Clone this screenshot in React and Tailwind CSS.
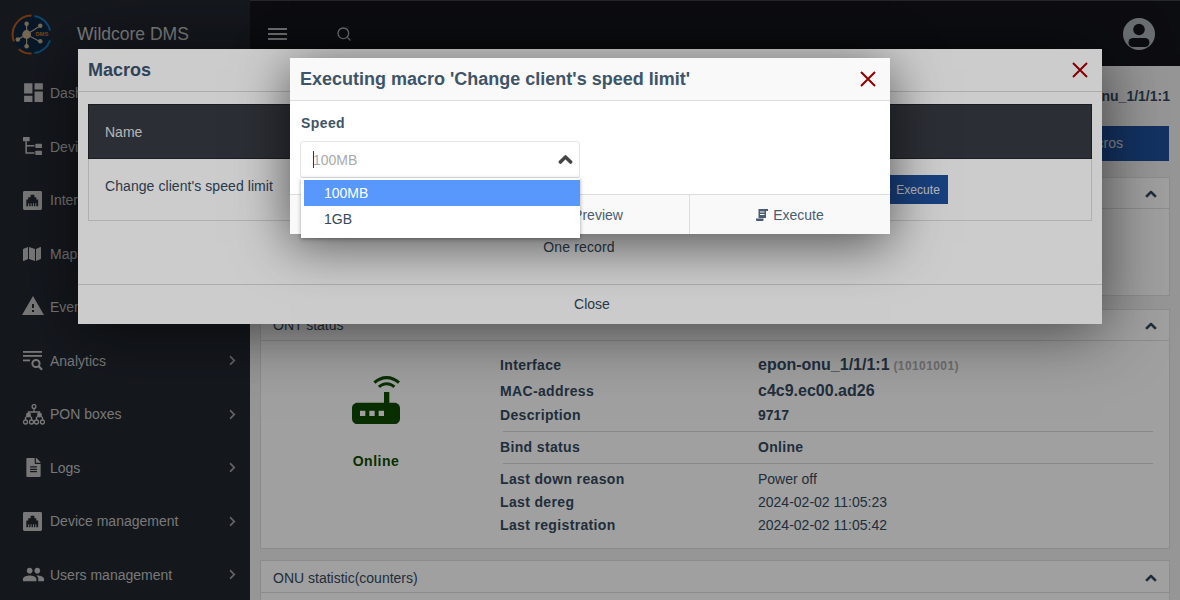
import { FaChevronUp, FaChevronRight, FaEye, FaFileAlt, FaMap, FaPlay } from 'react-icons/fa';
import { MdDashboard, MdPeople, MdRouter, MdWarning } from 'react-icons/md';
import { Search } from 'lucide-react';

const font = "font-['Liberation_Sans',Arial,sans-serif]";

const TreeIcon = () => (
  <svg viewBox="0 0 20 20" className="w-[19px] h-[19px]" fill="currentColor">
    <rect x="0" y="0" width="7" height="4.500" rx="0.6" />
    <rect x="13" y="7" width="7" height="4.500" rx="0.6" />
    <rect x="13" y="14.500" width="7" height="4.500" rx="0.6" />
    <path d="M2.500 4.500h1.600v4h8V10h-8v6h8v1.500H2.500z" />
  </svg>
);

const JackIcon = () => (
  <svg viewBox="0 0 20 20" className="w-[19px] h-[19px]" fill="currentColor">
    <path fillRule="evenodd" d="M1.500 0h17A1.500 1.500 0 0 1 20 1.500v17a1.500 1.500 0 0 1-1.500 1.500h-17A1.500 1.500 0 0 1 0 18.500v-17A1.500 1.500 0 0 1 1.500 0zM8 4v2.500H5.500V9H3.500v7h2v-3h1v3h1.500v-3h1v3h1.500v-3h1v3h1.500v-3h1v3h2V9h-2V6.500H12V4z" />
  </svg>
);

const AnalyticsIcon = () => (
  <svg viewBox="0 0 20 20" className="w-[20px] h-[20px]" fill="currentColor">
    <rect x="0" y="0" width="19" height="1.800" />
    <rect x="0" y="4" width="19" height="1.800" />
    <rect x="0" y="8.500" width="7" height="1.800" />
    <circle cx="13" cy="12.500" r="3.600" fill="none" stroke="currentColor" strokeWidth="2" />
    <path d="M15.500 15l3.500 3.800" stroke="currentColor" strokeWidth="2.200" />
  </svg>
);

const PonIcon = () => (
  <svg viewBox="0 0 22 21" className="w-[22px] h-[21px]" fill="none" stroke="currentColor" strokeWidth="1.300">
    <circle cx="11" cy="2.500" r="1.900" />
    <path d="M11 4.500V8M5.500 10V8h11v2M2.500 16v-2.500l3-2 3 2V16M13.500 16v-2.500l3-2 3 2V16" />
    <circle cx="5.500" cy="11" r="1.800" fill="currentColor" />
    <circle cx="16.500" cy="11" r="1.800" fill="currentColor" />
    <circle cx="2.500" cy="18" r="2" />
    <circle cx="8.500" cy="18" r="2" />
    <circle cx="13.500" cy="18" r="2" />
    <circle cx="19.500" cy="18" r="2" />
  </svg>
);

const ScrollIcon = () => (
  <svg viewBox="0 0 12 12" className="w-[12px] h-[12px]" fill="currentColor">
    <path fillRule="evenodd" d="M2.500 0H12v2H10v7H2.500zM4 2.500v1h4.500v-1zM4 5v1h4.500V5z" />
    <path d="M0 9.500h7.500V11q0 1-1 1H1q-1 0-1-1z" />
  </svg>
);

const Logo = () => (
  <svg viewBox="0 0 42 42" className="w-[41px] h-[41px] shrink-0">
    <circle cx="21" cy="21" r="19" fill="#10263f" />
    <path d="M21 1.500A19.500 19.500 0 0 0 3 28" fill="none" stroke="#b8571a" strokeWidth="2" />
    <path d="M8 36A19.500 19.500 0 0 0 21 40.500" fill="none" stroke="#b8571a" strokeWidth="2" />
    <path d="M24 2A19.500 19.500 0 0 1 40 17M40 27A19.500 19.500 0 0 1 24 40" fill="none" stroke="#1c6ea8" strokeWidth="2" />
    <g stroke="#b9a488" strokeWidth="1.200">
      <path d="M16 21 16 9M16 21 30 12M16 21 7 26M16 21 29 28M16 21 16 33" />
    </g>
    <g fill="#b9a488">
      <circle cx="16" cy="21" r="4.500" />
      <circle cx="16" cy="10" r="2.300" />
      <circle cx="30" cy="12" r="2.300" />
      <circle cx="7" cy="26" r="2.300" />
      <circle cx="30" cy="28" r="2.300" />
      <circle cx="16" cy="33" r="2.300" />
    </g>
    <text x="25" y="23" fontSize="6" fontWeight="700" fill="#b8701f" fontFamily="Liberation Sans">DMS</text>
  </svg>
);

const navItems = [
  { label: 'Dashboard', icon: <MdDashboard className="w-[25px] h-[25px] -ml-[2px] -mt-[1px]" /> },
  { label: 'Devices', icon: <TreeIcon /> },
  { label: 'Interfaces', icon: <JackIcon /> },
  { label: 'Maps', icon: <FaMap className="w-[18px] h-[18px]" /> },
  { label: 'Events', icon: <MdWarning className="w-[24px] h-[24px] -ml-[2px] -mt-[2px]" /> },
  { label: 'Analytics', icon: <AnalyticsIcon />, more: true },
  { label: 'PON boxes', icon: <PonIcon />, more: true },
  { label: 'Logs', icon: <FaFileAlt className="w-[17px] h-[19px] ml-[2px]" />, more: true },
  { label: 'Device management', icon: <JackIcon />, more: true },
  { label: 'Users management', icon: <MdPeople className="w-[23px] h-[23px] -ml-[1px]" />, more: true },
];

const Sidebar = () => (
  <aside className="w-[250px] shrink-0 bg-[#21262f] text-[#bdbdbd]">
    <div className="h-[66px] flex items-center pl-[11px] pt-[3px]">
      <Logo />
      <span className="ml-[25px] text-[17.500px] text-[#c8c8c8]">Wildcore DMS</span>
    </div>
    {navItems.map((item) => (
      <div key={item.label} className="h-[53.5px] flex items-center pl-[23px] pr-[14px] pt-[1px] text-[14px]">
        <span className="w-[27px] flex justify-start">{item.icon}</span>
        <span className="flex-1 pt-[1px]">{item.label}</span>
        {item.more && <FaChevronRight className="w-[7px] h-[11px] opacity-80" />}
      </div>
    ))}
  </aside>
);

const Panel = ({ title, className, headerClass = 'h-[31px]', children }) => (
  <section className={`bg-[#fbfbfb] border border-[#dddddd] ${className}`}>
    <div className={`pl-[12px] pr-[12px] flex items-center justify-between border-b border-[#dddddd] text-[14px] text-[#34495e] ${headerClass}`}>
      <span className="pt-[1px]">{title}</span>
      <FaChevronUp className="w-[12px] h-[12px] mt-[1px] text-[#2c4258] stroke-[40]" />
    </div>
    {children}
  </section>
);

const Row = ({ label, className, children }) => (
  <div className={`flex items-center text-[14px] text-[#34495e] ${className}`}>
    <span className="w-[258px] font-bold tracking-[0.35px]">{label}</span>
    <span>{children}</span>
  </div>
);

const OntStatus = () => (
  <div className="flex h-[208px]">
    <div className="w-[229px] flex flex-col items-center pt-[27px] text-[#0f4a00]">
      <MdRouter className="w-[64px] h-[64px]" />
      <span className="mt-[19px] ml-[1px] text-[14px] font-bold tracking-[0.5px]">Online</span>
    </div>
    <div className="flex-1 pl-[10px] pr-[16px] pt-[11px]">
      <Row label="Interface" className="h-[26px]">
        <span className="font-bold text-[16px]">epon-onu_1/1/1:1</span>{' '}
        <span className="font-bold text-[12px] tracking-[0.4px] text-[#adadad]">(10101001)</span>
      </Row>
      <Row label="MAC-address" className="h-[26px]"><span className="font-bold text-[16px]">c4c9.ec00.ad26</span></Row>
      <Row label="Description" className="h-[23px]"><span className="font-bold">9717</span></Row>
      <div className="h-px bg-[#d5d5d5] ml-[3px] mt-[4px] mb-[7px]" />
      <Row label="Bind status" className="h-[16px]"><span className="font-bold tracking-[0.3px]">Online</span></Row>
      <div className="h-px bg-[#d5d5d5] ml-[3px] mt-[8px] mb-[7px]" />
      <Row label="Last down reason" className="h-[16px]">Power off</Row>
      <Row label="Last dereg" className="h-[23px] mt-[4px]">2024-02-02 11:05:23</Row>
      <Row label="Last registration" className="h-[23px]">2024-02-02 11:05:42</Row>
    </div>
  </div>
);

const Main = () => (
  <main className="flex-1 min-w-0 flex flex-col bg-[#ececec]">
    <header className="h-[66px] shrink-0 bg-[#14161c] border-t border-[#3c3f46] flex items-center text-[#bdbdbd]">
      <div className="ml-[18px] w-[19px] flex flex-col gap-[3px]">
        <span className="h-[2px] bg-current" />
        <span className="h-[2px] bg-current" />
        <span className="h-[2px] bg-current" />
      </div>
      <Search className="ml-[49px] w-[16px] h-[16px]" strokeWidth={2} />
      <svg viewBox="0 0 32 32" className="ml-auto mr-[25px] w-[32px] h-[32px]">
        <circle cx="16" cy="16" r="16" fill="#a8adb5" />
        <circle cx="16" cy="11.500" r="5.800" fill="#14161c" />
        <rect x="5.500" y="20" width="21" height="9" rx="4.500" fill="#14161c" />
      </svg>
    </header>
    <div className="flex-1 min-h-0 overflow-hidden px-[10px]">
      <div className="h-[60px] flex items-center justify-end font-bold text-[14px] text-[#34495e]">epon-onu_1/1/1:1</div>
      <div className="flex justify-end pr-[1px]">
        <button className="h-[35px] w-[200px] pr-[46px] text-right text-[14px] bg-[#1f4f9a] text-[#d8d8d8]">Macros</button>
      </div>
      <Panel title="ONU info" className="mt-[16px] h-[119px]" />
      <Panel title="ONT status" className="mt-[13px] h-[240px]"><OntStatus /></Panel>
      <Panel title="ONU statistic(counters)" className="mt-[11px] h-[60px]" headerClass="h-[32px] pt-[2px]" />
    </div>
  </main>
);

const MacrosModal = () => (
  <div className="absolute left-[78px] top-[49px] w-[1024px] h-[275px] bg-white flex flex-col shadow-[0_5px_60px_rgba(0,0,0,0.6)]">
    <div className="h-[43px] shrink-0 px-[10px] flex items-center justify-between border-b border-[#d8d8d8]">
      <span className="text-[18px] font-bold text-[#3a5470]">Macros</span>
      <svg viewBox="0 0 16 16" className="w-[16px] h-[16px] mr-[4px]"><path d="M1 1l14 14M15 1L1 15" stroke="#a50000" strokeWidth="2" /></svg>
    </div>
    <div className="mx-[10px] mt-[12px] border border-[#dddddd] border-t-0">
      <div className="h-[55px] -mx-px bg-[#363a42] border border-[#22252b] text-[#e2e2e2] text-[14px] flex items-center pl-[16px] pt-[1px]">Name</div>
      <div className="h-[61px] flex justify-between pl-[16px] pr-[143px] pt-[16px] text-[14px] tracking-[0.07px] text-[#34495e]">
        <span className="pt-[1px]">Change client's speed limit</span>
        <button className="h-[29px] w-[100px] text-[12px] flex items-center justify-end gap-[5px] pr-[8px] bg-[#1f509e] text-[#e8e8e8]">
          <FaPlay className="w-[8px] h-[8px]" />
          Execute
        </button>
      </div>
    </div>
    <div className="h-[63px] pt-[16px] flex justify-center -translate-x-[11px] text-[14px] tracking-[0.15px] text-[#34495e]">One record</div>
    <div className="flex-1 border-t border-[#d8d8d8] flex items-center justify-center text-[14px] text-[#34495e]">
      <span className="translate-x-[2px]">Close</span>
    </div>
  </div>
);

const ExecModal = () => (
  <div className="absolute left-[290px] top-[58px] w-[600px] h-[176px] bg-white flex flex-col shadow-[0_10px_50px_rgba(0,0,0,0.6)]">
    <div className="h-[43px] shrink-0 pl-[10px] pr-[14px] flex items-center justify-between bg-[#f9f9f9] border-b border-[#dddddd]">
      <span className="text-[18px] font-bold text-[#3e5468]">Executing macro 'Change client's speed limit'</span>
      <svg viewBox="0 0 16 16" className="w-[16px] h-[16px]"><path d="M1 1l14 14M15 1L1 15" stroke="#8f0000" strokeWidth="2" /></svg>
    </div>
    <div className="flex-1 px-[10px] pt-[14px]">
      <div className="pl-[1px] text-[14px] font-bold tracking-[0.4px] text-[#3e5468] leading-[16px]">Speed</div>
      <div className="mt-[10px] w-[280px] h-[37px] border border-[#e4e4e4] rounded-[3px] flex items-center pl-[12px] pr-[6px] text-[14px] text-[#aaaaaa]">
        <span className="w-px h-[17px] bg-[#2c3b4b]" />
        <span className="flex-1 -ml-px pt-[1px]">100MB</span>
        <FaChevronUp className="w-[15px] h-[15px] text-[#444444] stroke-[40]" />
      </div>
    </div>
    <div className="h-[40px] shrink-0 bg-[#f9f9f9] border-t border-[#dddddd] flex text-[14px] text-[#4a5d70]">
      <div className="w-[200px]" />
      <div className="w-[199px] flex items-center justify-center gap-[5px] pt-[1px]">
        <FaEye className="w-[12px] h-[12px]" />
        Preview
      </div>
      <div className="flex-1 flex items-center justify-center gap-[5px] pt-[1px] border-l border-[#dddddd]">
        <ScrollIcon />
        Execute
      </div>
    </div>
    <div className="absolute left-[11px] top-[120px] w-[279px] h-[60px] bg-white pl-[3px] pt-[2px] text-[14px] text-[#34495e] shadow-[0_1px_4px_rgba(0,0,0,0.35)]">
      <div className="h-[26px] pl-[20px] flex items-center bg-[#5897fb] text-white">100MB</div>
      <div className="h-[26px] pl-[20px] flex items-center">1GB</div>
    </div>
  </div>
);

export default function App() {
  return (
    <div className={`relative w-[1180px] h-[600px] overflow-hidden flex ${font}`}>
      <Sidebar />
      <Main />
      <div className="absolute inset-0 bg-black/20" />
      <MacrosModal />
      <div className="absolute inset-0 bg-black/20" />
      <ExecModal />
    </div>
  );
}
